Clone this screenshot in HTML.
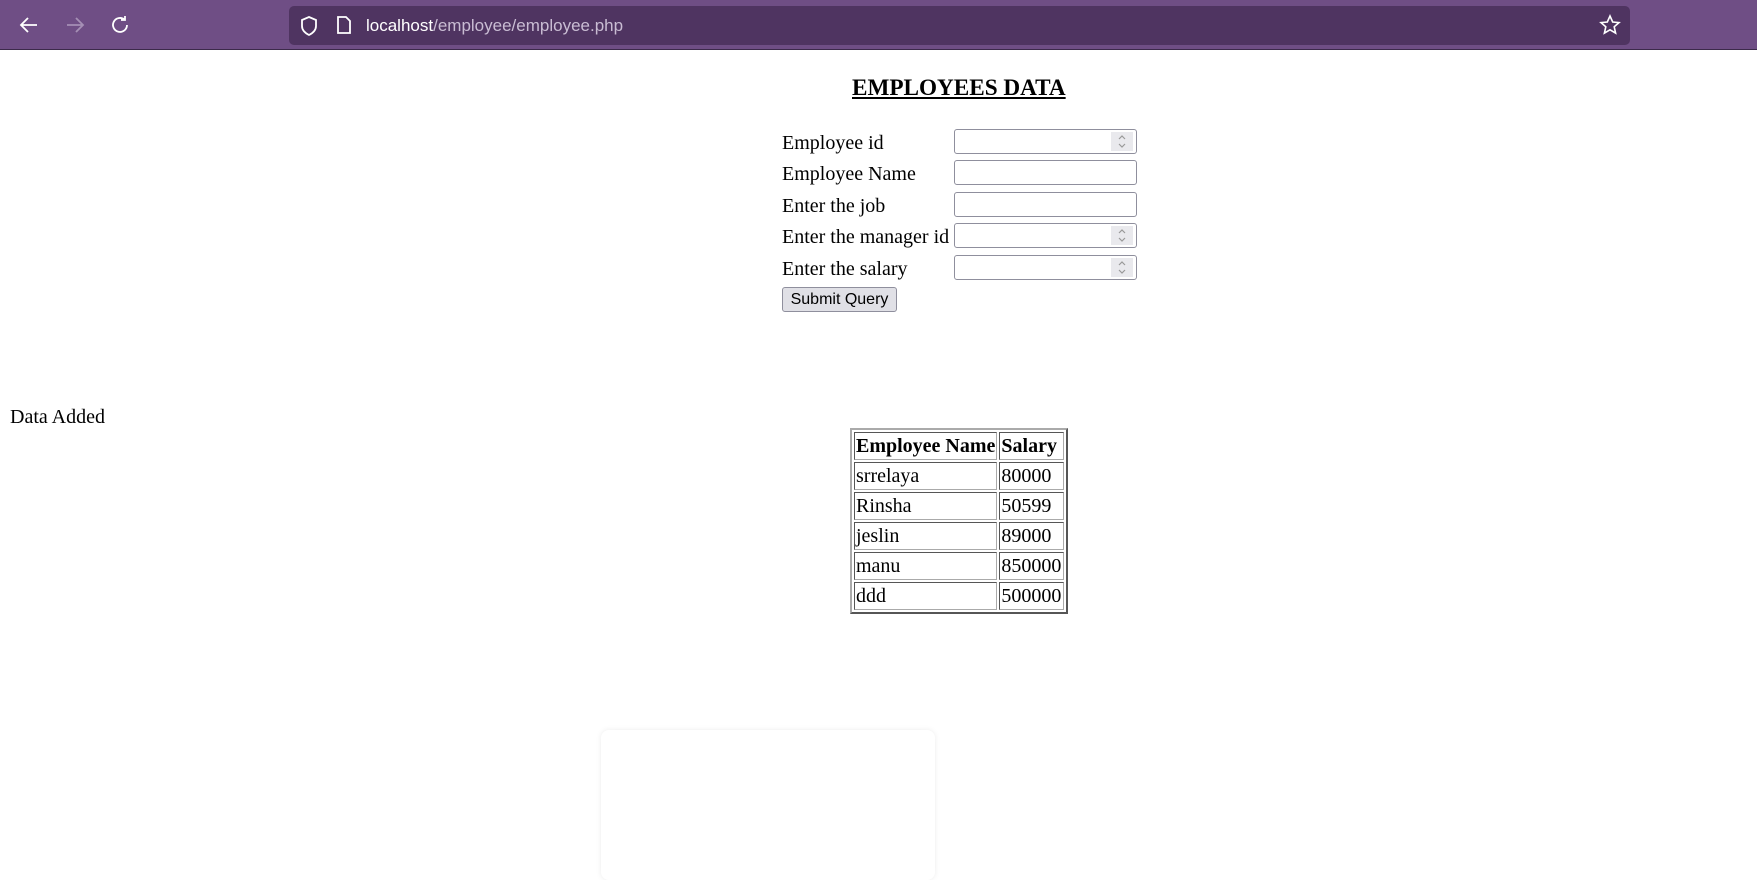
<!DOCTYPE html>
<html><head><meta charset="utf-8"><style>
body{margin:0;width:1757px;height:870px;overflow:hidden;font-family:"Liberation Serif",serif;font-size:20px;background:#fff;position:relative}
.bar{position:absolute;left:0;top:0;width:1757px;height:50px;background:#6f4e85;border-bottom:1px solid #3c2a4a;box-sizing:border-box}
.url{position:absolute;left:289px;top:6px;width:1341px;height:39px;background:#4f3461;border-radius:5px}
.url span{position:absolute;left:77px;top:10px;font-family:"Liberation Sans",sans-serif;font-size:17px;color:#fff}
.url span i{font-style:normal;color:#c9bcd3}
.abs{position:absolute}
h2{position:absolute;left:852px;top:75px;margin:0;font-size:23.2px;text-decoration:underline;font-weight:bold}
.lbl{position:absolute;left:782px}
.inp{position:absolute;left:954px;width:183px;height:25px;border:1px solid #8f8f9d;border-radius:3px;box-sizing:border-box}
.spin{position:absolute;right:3px;top:2px;width:22px;height:19px}
.btn{position:absolute;left:782px;top:287px;width:115px;height:25px;background:#e0e0e6;border:1px solid #8f8f9d;border-radius:3px;box-sizing:border-box;font-family:"Liberation Sans",sans-serif;font-size:16px;text-align:center;line-height:23px}
table{position:absolute;left:850px;top:428px;border-collapse:separate;border-spacing:2px;border:2px outset #aaa;font-size:20px}
td,th{border:1px inset #aaa;padding:1px 1px 0;height:25px;line-height:25px;text-align:left;box-sizing:content-box}
td+td,th+th{padding-right:2px}
</style></head><body>
<div class="bar">
<svg class="abs" style="left:18px;top:14px" width="22" height="22" viewBox="0 0 22 22" fill="none" stroke="#fff" stroke-width="1.8"><path d="M19 11H3M10 4l-7 7 7 7"/></svg>
<svg class="abs" style="left:64px;top:14px" width="22" height="22" viewBox="0 0 22 22" fill="none" stroke="#a58fb5" stroke-width="1.8"><path d="M3 11h16M12 4l7 7-7 7"/></svg>
<svg class="abs" style="left:109px;top:14px" width="22" height="22" viewBox="0 0 22 22" fill="none" stroke="#fff" stroke-width="1.8"><path d="M18 11a7 7 0 1 1-2.5-5.4M16 2v4h-4"/></svg>
<div class="url">
<svg class="abs" style="left:10px;top:9px" width="20" height="22" viewBox="0 0 20 22" fill="none" stroke="#fff" stroke-width="1.8"><path d="M10 2l7 3v6c0 4-3 7-7 9-4-2-7-5-7-9V5z"/></svg>
<svg class="abs" style="left:47px;top:9px" width="16" height="20" viewBox="0 0 16 20" fill="none" stroke="#fff" stroke-width="1.8"><path d="M2 2h8l4 4v12H2z"/></svg>
<span>localhost<i>/employee/employee.php</i></span>
<svg class="abs" style="left:1310px;top:8px" width="22" height="22" viewBox="0 0 22 22" fill="none" stroke="#fff" stroke-width="1.6"><path d="M11 2l2.7 6 6.3.6-4.8 4.2 1.4 6.3L11 15.8 5.4 19.1l1.4-6.3L2 8.6 8.3 8z"/></svg>
</div></div>
<h2>EMPLOYEES DATA</h2>
<div class="lbl" style="top:132px">Employee id</div>
<div class="lbl" style="top:163px">Employee Name</div>
<div class="lbl" style="top:195px">Enter the job</div>
<div class="lbl" style="top:226px">Enter the manager id</div>
<div class="lbl" style="top:258px">Enter the salary</div>
<div class="inp" style="top:129px"><svg class="spin" viewBox="0 0 22 19"><rect width="22" height="19" fill="#e9e9ed"/><path d="M8 7l3-3 3 3M8 12l3 3 3-3" fill="none" stroke="#999" stroke-width="1.2"/></svg></div>
<div class="inp" style="top:160px"></div>
<div class="inp" style="top:192px"></div>
<div class="inp" style="top:223px"><svg class="spin" viewBox="0 0 22 19"><rect width="22" height="19" fill="#e9e9ed"/><path d="M8 7l3-3 3 3M8 12l3 3 3-3" fill="none" stroke="#999" stroke-width="1.2"/></svg></div>
<div class="inp" style="top:255px"><svg class="spin" viewBox="0 0 22 19"><rect width="22" height="19" fill="#e9e9ed"/><path d="M8 7l3-3 3 3M8 12l3 3 3-3" fill="none" stroke="#999" stroke-width="1.2"/></svg></div>
<div class="btn">Submit Query</div>
<div class="abs" style="left:10px;top:406px">Data Added</div>
<table>
<tr><th>Employee Name</th><th>Salary</th></tr>
<tr><td>srrelaya</td><td>80000</td></tr>
<tr><td>Rinsha</td><td>50599</td></tr>
<tr><td>jeslin</td><td>89000</td></tr>
<tr><td>manu</td><td>850000</td></tr>
<tr><td>ddd</td><td>500000</td></tr>
</table>
<div class="abs" style="left:601px;top:730px;width:334px;height:150px;background:#fff;border-radius:8px;box-shadow:0 0 6px rgba(0,0,0,0.08)"></div>
</body></html>
